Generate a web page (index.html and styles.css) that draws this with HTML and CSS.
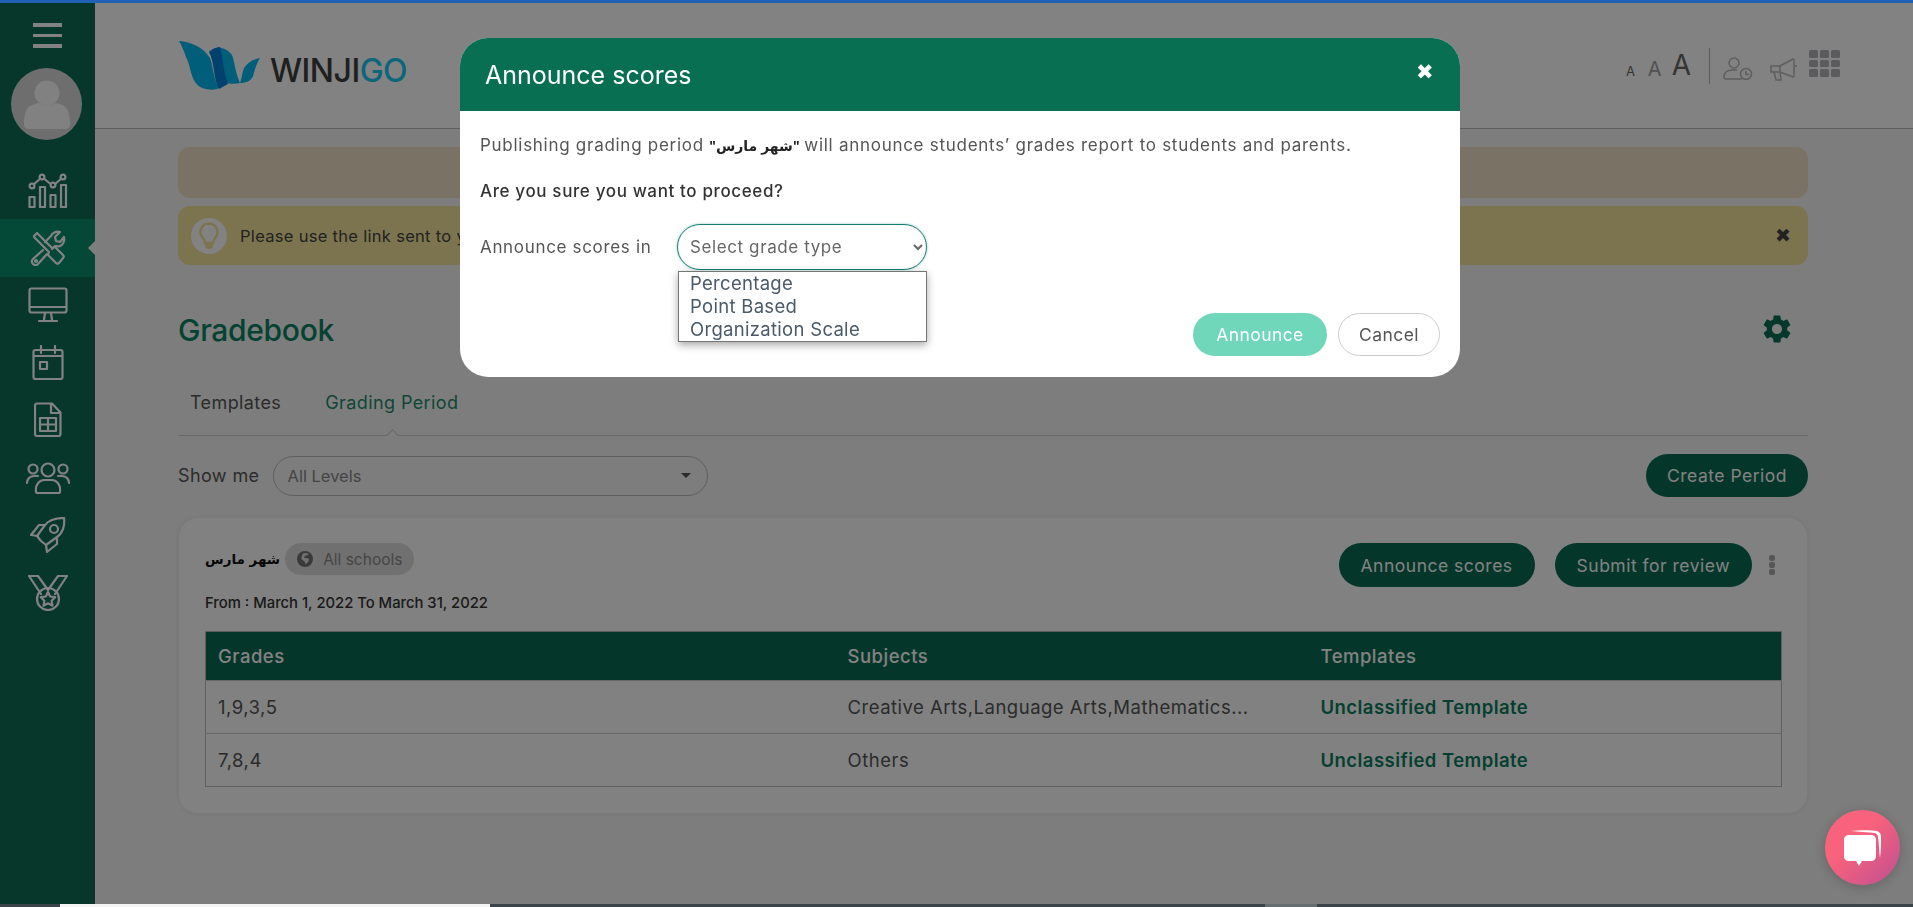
FILE: index.html
```html
<!DOCTYPE html>
<html lang="en">

<head>
    <meta charset="UTF-8">
    <meta name="viewport" content="width=device-width, initial-scale=1.0">
    <title>Gradebook</title>
    <link rel="stylesheet" href="styles.css">
</head>

<body>
    <div class="top-line"></div>

    <div class="app">
        <aside class="sidebar">
            <div class="menu-btn"><span></span><span></span><span></span></div>
            <div class="avatar">
                <svg viewBox="0 0 70 70" width="70" height="70">
                    <circle cx="35" cy="24" r="12.5" fill="#fdfdfd" />
                    <path d="M12 56c0-8 1-16 6-19 4-2 8-3 9-3 3 3 13 3 16 0 1 0 6 1 9 3 5 3 6 11 6 19 0 2-2 4-4 4H16c-2 0-4-2-4-4z" fill="#fdfdfd" />
                </svg>
            </div>
            <nav class="nav">
                <a class="nav-item">
                    <svg viewBox="0 0 40 36" width="40" height="36" class="nav-icon">
                        <path d="M4 14l10-9 11 9 10-9" />
                        <circle cx="4" cy="14" r="2.4" class="dot" /><circle cx="14" cy="5" r="2.4" class="dot" /><circle cx="25" cy="13" r="2.4" class="dot" /><circle cx="35" cy="5" r="2.4" class="dot" />
                        <rect x="1.5" y="25" width="5" height="10" /><rect x="12" y="15" width="5" height="20" /><rect x="22.5" y="23" width="5" height="12" /><rect x="33" y="13" width="5" height="22" />
                    </svg>
                </a>
                <a class="nav-item active">
                    <svg viewBox="0 0 36 36" width="36" height="36" class="nav-icon">
                        <path d="M4 6l3-3 15 15 3-1 8 8c1 1 1 2 0 3l-4 5c-1 1-2 1-3 0l-8-8 1-3L4 7z" />
                        <path d="M15 12l6-6c1-3 5-5 9-4l-5 5 1 4 4 1 4-5c1 4-1 8-4 9-2 1-4 0-5 0l-3 3" />
                        <path d="M13 20L3 29c-2 2-1 4 0 5 2 2 4 1 5 0l9-10" />
                        <circle cx="6" cy="31" r="1" />
                    </svg>
                </a>
                <a class="nav-item">
                    <svg viewBox="0 0 40 36" width="40" height="36" class="nav-icon">
                        <rect x="1.5" y="1.5" width="37" height="24" rx="2" />
                        <path d="M2 20h36M17 26l-1 7M23 26l1 7M11 34h18" />
                    </svg>
                </a>
                <a class="nav-item">
                    <svg viewBox="0 0 32 36" width="32" height="36" class="nav-icon">
                        <rect x="1.5" y="5" width="29" height="29" rx="2" />
                        <path d="M2 11h28M9 1v7M23 1v7" />
                        <rect x="8" y="17" width="7" height="7" />
                    </svg>
                </a>
                <a class="nav-item">
                    <svg viewBox="0 0 28 36" width="28" height="36" class="nav-icon">
                        <path d="M3 1.5h15l8.5 9V32c0 1-1 2-2 2H3c-1 0-2-1-2-2V3.500c0-1 1-2 2-2z" />
                        <path d="M17 2v9h9" />
                        <rect x="6" y="16" width="16" height="13" />
                        <path d="M6 22.500h16M14 16v13" />
                    </svg>
                </a>
                <a class="nav-item">
                    <svg viewBox="0 0 44 32" width="44" height="32" class="nav-icon">
                        <circle cx="22" cy="8" r="6.500" /><circle cx="7" cy="7" r="4.500" /><circle cx="37" cy="7" r="4.500" />
                        <path d="M1 21c0-4 3-7 7-7h4M43 21c0-4-3-7-7-7h-4" />
                        <path d="M10 30c-1-8 4-12 8-12h8c4 0 9 4 8 12-.1 .5-1 1-1 1H11s-1-.5-1-1z" />
                    </svg>
                </a>
                <a class="nav-item">
                    <svg viewBox="0 0 36 36" width="36" height="36" class="nav-icon">
                        <path d="M11 24L7 19 15 8c4-5 12-7 19-7 1 7-1 15-7 19l-11 8z" />
                        <circle cx="24" cy="12" r="4" />
                        <path d="M15 8H9L1 18l7 1M27 21v6l-10 8-1-7" />
                    </svg>
                </a>
                <a class="nav-item">
                    <svg viewBox="0 0 40 36" width="40" height="36" class="nav-icon">
                        <path d="M1 1h9l10 14L30 1h9L27 19M1 1l12 18" />
                        <circle cx="20" cy="24" r="11" />
                        <path d="M20 17l2.200 4.500 5 .7-3.600 3.500 .9 5-4.500-2.400-4.500 2.400 .9-5-3.600-3.500 5-.7z" />
                    </svg>
                </a>
            </nav>
        </aside>

        <main class="main">
            <header class="topbar">
                <div class="logo">
                    <svg viewBox="0 0 84 52" width="84" height="52">
                        <path d="M1 1c12 1 24 6 31 17 3 7 3 20 9 30-3 2-8 2-13 1C12 46 14 28 8 17 6 11 4 6 1 1z" fill="#00b8f0" />
                        <path d="M31 12c6-6 16-6 23 3 3 8 3 17 8 28-4 1-10 1-15 0-7-8-6-23-16-31z" fill="#00b8f0" />
                        <path d="M31 12c2-2 7-5 11-5 3 10 3 24 8 37l-9 5c-6-10-4-26-10-37z" fill="#0080d8" />
                        <path d="M82 18c-7 1-13 5-16 10-2 5-2 10-4 15 6 0 11-2 13-7 2-6 3-12 7-18z" fill="#00b8f0" />
                    </svg>
                    <span class="logo-text">WINJI<b>GO</b></span>
                </div>
                <div class="tools">
                    <span class="font-a small">A</span>
                    <span class="font-a mid">A</span>
                    <span class="font-a big">A</span>
                    <span class="tools-sep"></span>
                    <svg viewBox="0 0 30 24" width="30" height="24" class="tool-icon icon-person">
                        <circle cx="11" cy="6" r="5" />
                        <path d="M19 22H3c-1 0-2-1-2-2 0-5 4-7 8-7h5" />
                        <circle cx="23" cy="17" r="5.500" />
                        <path d="M23 14v3.500h3" />
                    </svg>
                    <svg viewBox="0 0 28 24" width="28" height="24" class="tool-icon icon-horn">
                        <path d="M1 9h9l13-7c1 0 1 0 1 1v16c0 1-1 1-1 1l-13-5H1z" />
                        <path d="M10 9v6M4 15l2 8h5l-1-8M25 9h2" />
                    </svg>
                    <div class="grid-icon">
                        <i></i><i></i><i></i><i></i><i></i><i></i><i></i><i></i><i></i>
                    </div>
                </div>
            </header>

            <section class="content">
                <div class="alert alert-orange"></div>
                <div class="alert alert-yellow">
                    <span class="bulb">
                        <svg viewBox="0 0 20 28" width="20" height="28">
                            <path d="M10 1.500a8.500 8.500 0 0 0-6 14.500c1 2 2 3 2 5h8c0-2 1-3 2-5a8.500 8.500 0 0 0-6-14.500z" fill="none" stroke="#f3e399" stroke-width="2.500" />
                            <path d="M6 21h8v3c0 2-2 3-4 3s-4-1-4-3z" fill="#f3e399" />
                        </svg>
                    </span>
                    <span class="alert-text">Please use the link sent to y</span>
                    <span class="alert-close">&#10006;</span>
                </div>

                <div class="title-row">
                    <h1>Gradebook</h1>
                    <svg viewBox="0 0 24 24" width="34" height="34" class="gear">
                        <path d="M19.14 12.94c.04-.3.06-.61.06-.94 0-.32-.02-.64-.07-.94l2.03-1.58a.49.49 0 0 0 .12-.61l-1.92-3.32a.488.488 0 0 0-.59-.22l-2.39.96c-.5-.38-1.03-.7-1.62-.94l-.36-2.54a.484.484 0 0 0-.48-.41h-3.84c-.24 0-.43.17-.47.41l-.36 2.54c-.59.24-1.13.57-1.62.94l-2.39-.96c-.22-.08-.47 0-.59.22L2.74 8.87c-.12.21-.08.47.12.61l2.03 1.58c-.05.3-.09.63-.09.94s.02.64.07.94l-2.03 1.58a.49.49 0 0 0-.12.61l1.92 3.32c.12.22.37.29.59.22l2.39-.96c.5.38 1.03.7 1.62.94l.36 2.54c.05.24.24.41.48.41h3.84c.24 0 .44-.17.47-.41l.36-2.54c.59-.24 1.13-.56 1.62-.94l2.39.96c.22.08.47 0 .59-.22l1.92-3.32c.12-.22.07-.47-.12-.61l-2.01-1.58zM12 15.6c-1.98 0-3.6-1.62-3.6-3.6s1.62-3.6 3.6-3.6 3.6 1.62 3.6 3.6-1.62 3.6-3.6 3.6z" />
                    </svg>
                </div>

                <div class="tabs">
                    <a class="tab">Templates</a>
                    <a class="tab tab-active">Grading Period</a>
                </div>

                <div class="filter-row">
                    <label class="filter-label">Show me</label>
                    <div class="filter-select">All Levels<span class="caret"></span></div>
                    <button class="btn-dark btn-create">Create Period</button>
                </div>

                <div class="card">
                    <div class="card-head">
                        <div>
                            <div class="period-name">
                                <span class="arabic">شهر مارس</span>
                                <span class="pill">
                                    <svg viewBox="0 0 16 16" width="16" height="16">
                                        <circle cx="8" cy="8" r="8" fill="#707070" />
                                        <path d="M6 2.500c2-1 4-.5 6 .5-1 1.500-3 1-4 2-1 .8-1 1.500 0 2 2 0 4 0 4 1.500 0 2-2 3-3 5-1-1-.5-2.500-2-3.500-2-1-3-2-2.500-4 .5-1.500 1-3 1.500-3.500z" fill="#dcdcdc" />
                                    </svg>
                                    All schools
                                </span>
                            </div>
                            <div class="period-dates">From : March 1, 2022 To March 31, 2022</div>
                        </div>
                        <div class="card-actions">
                            <button class="btn-dark">Announce scores</button>
                            <button class="btn-dark">Submit for review</button>
                            <span class="dots"><i></i><i></i><i></i></span>
                        </div>
                    </div>

                    <table class="grades">
                        <thead>
                            <tr>
                                <th class="col-grades">Grades</th>
                                <th class="col-subjects">Subjects</th>
                                <th>Templates</th>
                            </tr>
                        </thead>
                        <tbody>
                            <tr>
                                <td>1,9,3,5</td>
                                <td>Creative Arts,Language Arts,Mathematics...</td>
                                <td class="tpl">Unclassified Template</td>
                            </tr>
                            <tr>
                                <td>7,8,4</td>
                                <td>Others</td>
                                <td class="tpl">Unclassified Template</td>
                            </tr>
                        </tbody>
                    </table>
                </div>
            </section>
        </main>

        <div class="backdrop"></div>
    </div>

    <div class="modal">
        <div class="modal-head">
            <h2>Announce scores</h2>
            <span class="modal-close">&#10006;</span>
        </div>
        <div class="modal-body">
            <p class="modal-text">Publishing grading period <b>"<span class="arabic-sm">شهر مارس</span>"</b> will announce students’ grades report to students and parents.</p>
            <p class="modal-ask">Are you sure you want to proceed?</p>
            <div class="modal-field">
                <label class="field-label">Announce scores in</label>
                <div class="select-wrap">
                    <select class="grade-select">
                        <option>Select grade type</option>
                    </select>
                    <ul class="select-list">
                        <li>Percentage</li>
                        <li>Point Based</li>
                        <li>Organization Scale</li>
                    </ul>
                </div>
            </div>
            <div class="modal-foot">
                <button class="btn-announce">Announce</button>
                <button class="btn-cancel">Cancel</button>
            </div>
        </div>
    </div>

    <div class="chat-btn">
        <svg viewBox="0 0 40 38" width="40" height="38">
            <path d="M8 2c8-1 20-1 26 0 3 1 4 3 4 6 0 7 0 14-1 21-1-6-1-15-2-21 0-2-1-3-3-4C25 3 15 3 8 2z" fill="#fff" />
            <path d="M6 6h22c3 0 5 2 5 5v16c0 3-2 5-5 5h-9l-3 5-3-5H6c-3 0-5-2-5-5V11c0-3 2-5 5-5z" fill="#fff" />
        </svg>
    </div>

    <div class="bottom-strip">
        <span class="strip-a"></span>
        <span class="strip-b"></span>
        <span class="strip-c"></span>
        <span class="strip-d"></span>
        <span class="strip-e"></span>
    </div>
</body>

</html>
```

FILE: styles.css
```css
* {
    box-sizing: border-box;
}

html,
body {
    height: 100%;
}

body {
    margin: 0;
    display: flex;
    flex-direction: column;
    overflow: hidden;
    background: #fff;
    color: #333;
    font-family: Inter, "Noto Sans", sans-serif;
    font-size: 15px;
}

.top-line {
    height: 3px;
    background: #1f62b4;
    flex: none;
}

.app {
    flex: 1;
    display: flex;
    position: relative;
    min-height: 0;
}

.backdrop {
    position: absolute;
    inset: 0;
    background: rgba(0, 0, 0, 0.49);
}

.bottom-strip {
    height: 3px;
    flex: none;
    display: flex;
    background: #3b4449;
}

.strip-a {
    width: 60px;
}

.strip-b {
    width: 430px;
    background: #f4f4f4;
}

.strip-c {
    width: 775px;
}

.strip-d {
    width: 52px;
    background: #666e72;
}

/* sidebar */
.sidebar {
    width: 95px;
    flex: none;
    background: #0e6c55;
    display: flex;
    flex-direction: column;
    align-items: center;
}

.menu-btn {
    margin-top: 20px;
    width: 29px;
    display: flex;
    flex-direction: column;
    gap: 7px;
}

.menu-btn span {
    height: 3.500px;
    background: #fff;
}

.avatar {
    margin: 20px 2px 0 0;
    width: 71px;
    height: 72px;
    border-radius: 50%;
    background: #d8d8d8;
    display: flex;
    align-items: center;
    justify-content: center;
}

.nav {
    margin-top: 22px;
    width: 100%;
    display: flex;
    flex-direction: column;
}

.nav-item {
    height: 57.500px;
    display: flex;
    align-items: center;
    justify-content: center;
    position: relative;
}

.nav-item.active {
    background: #08906e;
}

.nav-item.active::after {
    content: "";
    position: absolute;
    right: 0;
    top: 50%;
    margin-top: -7px;
    border: 7px solid transparent;
    border-left: 0;
    border-right-color: #f5f5f5;
}

.nav-icon {
    fill: none;
    stroke: #fff;
    stroke-width: 2.200;
    stroke-linejoin: round;
    stroke-linecap: round;
}

.nav-icon .dot {
    fill: #0e6c55;
}

/* header */
.main {
    flex: 1;
    min-width: 0;
    background: #f5f5f5;
}

.topbar {
    height: 126px;
    background: #fff;
    border-bottom: 1px solid #bbb;
    padding: 37px 73px 0 83px;
    display: flex;
    justify-content: space-between;
    align-items: flex-start;
}

.logo {
    display: flex;
    align-items: flex-end;
    gap: 8px;
}

.logo-text {
    font-size: 32px;
    font-weight: 500;
    color: #3e3e3e;
    line-height: 36px;
    letter-spacing: -0.5px;
    margin-bottom: 3px;
}

.logo-text b {
    font-weight: 500;
    color: #16c8f5;
}

.tools {
    display: flex;
    align-items: center;
    padding-top: 8px;
    color: #6f6f6f;
}

.font-a {
    line-height: 1;
    font-weight: 400;
}

.small {
    font-size: 13px;
    margin: 10px 13px 0 0;
    color: #666;
}

.mid {
    font-size: 20px;
    margin: 6px 10px 0 0;
    color: #a0a0a0;
}

.big {
    font-size: 28px;
    margin: -3px 18px 0 0;
    color: #666;
}

.tools-sep {
    width: 1px;
    height: 36px;
    background: #b5b5b5;
    margin-right: 13px;
}

.tool-icon {
    fill: none;
    stroke: #b8b8b8;
    stroke-width: 1.500;
    margin-top: 5px;
}

.icon-person {
    margin-right: 17px;
}

.icon-horn {
    margin-right: 11px;
}

.grid-icon {
    width: 31px;
    height: 27px;
    display: grid;
    grid-template-columns: repeat(3, 1fr);
    grid-template-rows: repeat(3, 1fr);
    gap: 2px;
    margin-top: -5px;
}

.grid-icon i {
    background: #b2b2b8;
    border-radius: 1.500px;
}

/* content */
.content {
    padding: 18px 105px 0 83px;
}

.alert {
    border-radius: 12px;
    margin-bottom: 8px;
}

.alert-orange {
    height: 51px;
    background: #efe0c4;
}

.alert-yellow {
    height: 59px;
    background: #f3e399;
    display: flex;
    align-items: center;
    padding: 0 17px 0 13px;
}

.bulb {
    width: 36px;
    height: 36px;
    border-radius: 50%;
    background: #fff;
    display: flex;
    align-items: center;
    justify-content: center;
    margin-right: 13px;
}

.alert-text {
    flex: 1;
    font-size: 16.500px;
    letter-spacing: 0.3px;
    color: #444;
}

.alert-close {
    font-size: 19px;
    color: #444;
}

.title-row {
    display: flex;
    justify-content: space-between;
    align-items: center;
    margin-top: 45px;
    height: 40px;
    padding-right: 14px;
}

h1 {
    margin: 0;
    font-size: 30px;
    font-weight: 500;
    color: #0b8263;
    letter-spacing: -0.3px;
}

.gear {
    fill: #096f53;
    margin-bottom: 2px;
}

.tabs {
    margin-top: 31px;
    height: 55px;
    border-bottom: 1px solid #ccc;
    display: flex;
    gap: 44px;
    padding: 11px 12px 0;
}

.tab {
    font-size: 18px;
    color: #555;
    letter-spacing: 0.4px;
    position: relative;
    height: 100%;
}

.tab-active {
    color: #1f8a6c;
}

.tab-active::after {
    content: "";
    position: absolute;
    left: 50%;
    bottom: 0;
    width: 8px;
    height: 8px;
    margin-left: -4px;
    margin-bottom: -5px;
    transform: rotate(45deg);
    background: #f5f5f5;
    border-left: 1px solid #ccc;
    border-top: 1px solid #ccc;
}

.filter-row {
    display: flex;
    align-items: center;
    margin-top: 18px;
    height: 43px;
}

.filter-label {
    font-size: 18px;
    color: #555;
    margin-right: 13px;
    letter-spacing: 0.4px;
}

.filter-select {
    width: 435px;
    height: 40px;
    border: 1px solid #bbb;
    border-radius: 20px;
    background: #f5f5f5;
    padding: 0 14px;
    display: flex;
    align-items: center;
    justify-content: space-between;
    color: #888;
    font-size: 16.500px;
}

.caret {
    border: 5px solid transparent;
    border-top-color: #555;
    border-bottom: 0;
    margin-right: 2px;
}

.btn-dark {
    height: 44px;
    border: none;
    border-radius: 22px;
    background: #086a52;
    color: #fff;
    font-family: inherit;
    font-size: 17.500px;
    letter-spacing: 0.5px;
    padding: 0 22px;
    white-space: nowrap;
}

.btn-create {
    margin-left: auto;
    height: 43px;
    padding: 0 21px;
}

.card {
    margin-top: 20px;
    height: 297px;
    background: #fdfdfd;
    border: 1px solid #efefef;
    border-radius: 20px;
    padding: 25px 25px 0 26px;
    box-shadow: 0 0 4px rgba(0, 0, 0, 0.06);
}

.card-head {
    display: flex;
    justify-content: space-between;
    align-items: flex-start;
    height: 88px;
}

.period-name {
    display: flex;
    align-items: center;
    height: 32px;
    gap: 5px;
}

.arabic {
    font-family: "DejaVu Sans", sans-serif;
    font-weight: 700;
    font-size: 13.500px;
    color: #111;
}

.pill {
    height: 32px;
    border-radius: 16px;
    background: #dcdcdc;
    color: #888;
    font-size: 15.500px;
    display: flex;
    align-items: center;
    gap: 10px;
    padding: 0 12px;
}

.period-dates {
    margin-top: 19px;
    font-size: 14.800px;
    font-weight: 500;
    color: #333;
}

.card-actions {
    display: flex;
    align-items: center;
    gap: 20px;
}

.dots {
    display: flex;
    flex-direction: column;
    gap: 1px;
    margin: 0 7px 0 -3px;
}

.dots i {
    width: 6px;
    height: 6px;
    border-radius: 2px;
    background: #aaa;
}

.grades {
    width: 100%;
    border-collapse: collapse;
    border: 1px solid #bbb;
    table-layout: fixed;
    font-size: 18.500px;
    letter-spacing: 0.5px;
}

.grades th {
    height: 49px;
    background: #086a52;
    color: #fff;
    text-align: left;
    font-weight: 500;
    padding: 0 12px;
}

.grades td {
    height: 53px;
    padding: 0 12px;
    border-top: 1px solid #ccc;
    color: #555;
}

.col-grades {
    width: 630px;
}

.col-subjects {
    width: 473px;
}

.grades .tpl {
    color: #0c7d60;
    font-weight: 600;
    letter-spacing: 0.45px;
}

/* modal */
.modal {
    position: fixed;
    left: 460px;
    top: 38px;
    width: 1000px;
    height: 339px;
    background: #fff;
    border-radius: 28px;
    overflow: hidden;
}

.modal-head {
    height: 73px;
    background: #086f53;
    color: #fff;
    display: flex;
    justify-content: space-between;
    align-items: center;
    padding: 0 26px 0 25px;
}

h2 {
    margin: 0;
    font-size: 25px;
    font-weight: 400;
}

.modal-close {
    font-size: 21px;
    margin-bottom: 6px;
}

.modal-body {
    padding: 23px 20px 0;
    color: #555;
    font-size: 17px;
}

.modal-text {
    margin: 0;
    line-height: 22px;
    letter-spacing: 0.72px;
}

.modal-text b {
    color: #222;
    font-family: "Liberation Sans", "DejaVu Sans", sans-serif;
    font-size: 14px;
    letter-spacing: 0;
}

.modal-ask {
    margin: 23px 0 0;
    line-height: 22px;
    font-weight: 500;
    letter-spacing: 0.63px;
    color: #333;
}

.modal-field {
    display: flex;
    align-items: center;
    margin-top: 22px;
}

.field-label {
    width: 197px;
    letter-spacing: 0.67px;
}

.select-wrap {
    position: relative;
    width: 250px;
}

.grade-select {
    width: 100%;
    height: 46px;
    border: 1.500px solid #137e74;
    border-radius: 23px;
    background: #fff;
    color: #666;
    padding: 0 8px;
    font-family: inherit;
    font-size: 17px;
    letter-spacing: 0.6px;
    box-shadow: 0 0 3px rgba(19, 126, 116, 0.4);
}

.select-list {
    position: absolute;
    left: 1px;
    right: 0;
    top: 47px;
    margin: 0;
    padding: 0 0 0 11px;
    list-style: none;
    background: #fff;
    border: 1px solid #767676;
    box-shadow: 0 3px 8px rgba(0, 0, 0, 0.35);
    font-size: 18.500px;
    letter-spacing: 0.3px;
    line-height: 23px;
    color: #4a5a68;
}

.modal-foot {
    position: absolute;
    right: 20px;
    bottom: 21px;
    display: flex;
    gap: 11px;
}

.btn-announce,
.btn-cancel {
    height: 43px;
    border-radius: 22px;
    font-family: inherit;
    font-size: 17.500px;
    letter-spacing: 0.4px;
}

.btn-announce {
    width: 134px;
    border: none;
    background: #71d7bb;
    color: #fff;
}

.btn-cancel {
    width: 102px;
    border: 1px solid #ccc;
    background: #fff;
    color: #555;
}

/* chat */
.chat-btn {
    position: fixed;
    left: 1825px;
    top: 810px;
    width: 75px;
    height: 75px;
    border-radius: 50%;
    background: linear-gradient(135deg, #f9627c 40%, #bd4f92);
    box-shadow: 0 2px 12px rgba(0, 0, 0, 0.2);
    display: flex;
    align-items: center;
    justify-content: center;
}
```
